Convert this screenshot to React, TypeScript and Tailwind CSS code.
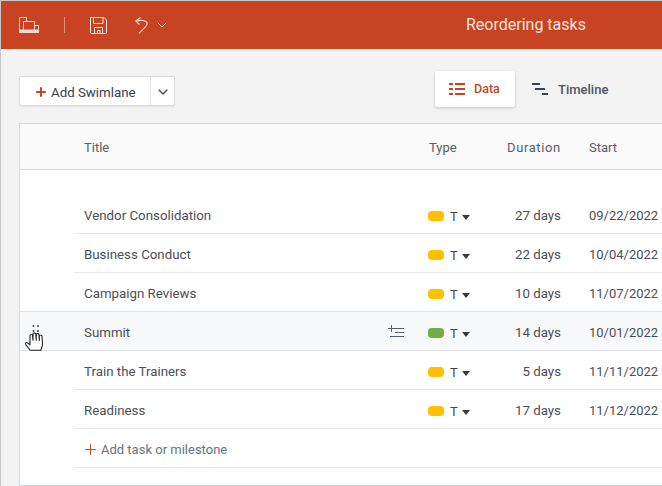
import React from 'react';
import { ChevronDown, Plus } from 'lucide-react';

// Types
interface Task {
    title: string;
    color: string;
    duration: string;
    start: string;
    active?: boolean;
}

const tasks: Task[] = [
    { title: 'Vendor Consolidation', color: 'bg-[#ffc000]', duration: '27 days', start: '09/22/2022' },
    { title: 'Business Conduct', color: 'bg-[#ffc000]', duration: '22 days', start: '10/04/2022' },
    { title: 'Campaign Reviews', color: 'bg-[#ffc000]', duration: '10 days', start: '11/07/2022' },
    { title: 'Summit', color: 'bg-[#70ad47]', duration: '14 days', start: '10/01/2022', active: true },
    { title: 'Train the Trainers', color: 'bg-[#ffc000]', duration: '5 days', start: '11/11/2022' },
    { title: 'Readiness', color: 'bg-[#ffc000]', duration: '17 days', start: '11/12/2022' },
];

// Icons
const GanttLogo = () => (
    <svg width="20" height="16" viewBox="0 0 20 16" fill="none" stroke="#f6d8cc" strokeWidth="1">
        <path d="M0.5 13V0.5H7.5V4" />
        <path d="M4.5 13V4.5H15.5V13" />
        <path d="M15.5 8.5H19.5V13" />
        <rect x="0" y="12.5" width="20" height="3.5" fill="#f6d8cc" stroke="none" />
    </svg>
);

const SaveIcon = () => (
    <svg width="17" height="17" viewBox="0 0 17 17" fill="none" stroke="#fbe9e2" strokeWidth="1">
        <path d="M0.5 0.5H14L16.5 3V15.5A1 1 0 0 1 15.5 16.5H1.5A1 1 0 0 1 0.5 15.5Z" />
        <path d="M3.5 0.5V6.5H13V0.5" />
        <path d="M4.5 16.5V10.5H12.5V16.5" />
        <path d="M7.5 13.5H10V16.5H7.5Z" />
    </svg>
);

const UndoIcon = () => (
    <svg width="13" height="17" viewBox="0 0 13 17" fill="none" stroke="#f6d8cc" strokeWidth="1.1">
        <path d="M5.5 0.5L0.8 4L4.5 7.5" />
        <path d="M0.8 4C6 2.8 11.8 3.2 12.2 6.5C12.5 9 6.5 13 4 16.5" />
    </svg>
);

const DataIcon = () => (
    <svg width="16" height="12" viewBox="0 0 16 12" fill="#c8431f">
        <rect x="0" y="0" width="4" height="2" />
        <rect x="6" y="0" width="10" height="2" />
        <rect x="0" y="5" width="4" height="2" />
        <rect x="6" y="5" width="10" height="2" />
        <rect x="0" y="10" width="4" height="2" />
        <rect x="6" y="10" width="10" height="2" />
    </svg>
);

const TimelineIcon = () => (
    <svg width="16" height="12" viewBox="0 0 16 12" fill="#3a4654">
        <rect x="0" y="0" width="8" height="2" />
        <rect x="3" y="5" width="10" height="2" />
        <rect x="10" y="10" width="6" height="2" />
    </svg>
);

const SubtaskIcon = () => (
    <svg width="16" height="13" viewBox="0 0 16 13" fill="none" stroke="#56606a" strokeWidth="1" className="-mt-[4px]">
        <path d="M0 3.5H7M3.5 0V7" />
        <path d="M7 3.5H16M7 7.5H16M2 11.5H16" />
    </svg>
);

const HandCursor = () => (
    <svg width="20" height="27" viewBox="0 0 20 27" className="absolute left-[5px] top-[13px]">
        <circle cx="8.5" cy="1" r="1" fill="#444" />
        <circle cx="13" cy="1" r="1" fill="#444" />
        <circle cx="8.5" cy="6" r="1" fill="#444" />
        <circle cx="13" cy="6" r="1" fill="#444" />
        <g transform="translate(-1 0) scale(1.25 1.1)">
            <path
                d="M5 23L1.2 17.5C0.6 16.4 2 15.4 3 16.4L4.8 18V9.5C4.8 8.2 6.6 8.2 6.8 9.5L7.2 14V8.2C7.2 7 9.2 7 9.4 8.2L9.8 14V8.6C9.8 7.4 11.8 7.4 12 8.6L12.3 14.2V10C12.4 8.9 14.2 8.9 14.4 10L14.8 17C14.8 19.5 14 21 13.4 23Z"
                fill="#fff"
                stroke="#1a1a1a"
                strokeWidth="0.85"
                strokeLinejoin="round"
            />
        </g>
    </svg>
);

const TypeCell = ({ color }: { color: string }) => (
    <div className="flex items-center">
        <span className={`w-4 h-[10px] rounded-[4px] ${color}`} />
        <span className="ml-[6px] mt-[2px] text-[13px] text-[#444]">T</span>
        <span className="ml-[4px] mt-[2px] w-0 h-0 border-x-[4px] border-x-transparent border-t-[5px] border-t-[#3a3a3a]" />
    </div>
);

// Row
const TaskRow = ({ task }: { task: Task }) => (
    <div className={`relative flex ${task.active ? 'h-[40px] -mt-px bg-[#f8f9fa] border-y border-[#e1e3e6]' : 'h-[39px]'}`}>
        <div className="w-[54px] shrink-0" />
        <div className={`flex flex-1 items-center min-w-0 pt-[4px] text-[13.3px] ${task.active ? '' : 'border-b border-[#e6e7e9]'}`}>
            <div className="w-[345px] shrink-0 flex items-center justify-between pl-[10px] pr-[15px] text-[#4a4f55]">
                <span>{task.title}</span>
                {task.active && <SubtaskIcon />}
            </div>
            <div className="w-[68px] shrink-0 pl-[9px]">
                <TypeCell color={task.color} />
            </div>
            <div className="w-[74px] shrink-0 text-right text-[#4a4f55]">{task.duration}</div>
            <div className="pl-[28px] whitespace-nowrap text-[13px] text-[#4a4f55]">{task.start}</div>
        </div>
        {task.active && <HandCursor />}
    </div>
);

// Page
export default function App() {
    return (
        <div className="w-[662px] h-[486px] overflow-hidden bg-[#f3f3f3] border-t border-l border-[#c9c9c9] font-['Roboto',sans-serif] text-[13px]">
            {/* Top bar */}
            <div className="flex items-center h-[48px] bg-[#c84321] pl-[18px]">
                <GanttLogo />
                <div className="w-px h-4 bg-[#e08e75] ml-[25px]" />
                <div className="ml-[25px]"><SaveIcon /></div>
                <div className="ml-[28px]"><UndoIcon /></div>
                <ChevronDown className="ml-[6px] text-[#f6d8cc]" size={16} strokeWidth={1.5} />
                <span className="ml-auto w-[196px] text-[16px] text-[#fbe6de]">Reordering tasks</span>
            </div>

            {/* Toolbar */}
            <div className="flex h-[74px] pl-[18px] relative">
                <div className="flex items-center mt-[27px] h-[30px] pt-[2px] bg-white border border-[#dcdcdc] rounded-[2px] shadow-[0_1px_1px_rgba(0,0,0,0.05)]">
                    <div className="flex items-center w-[130px] pl-[14px] gap-[3px] text-[13.3px] text-[#36404a]">
                        <Plus size={14} strokeWidth={3.4} className="text-[#c8431f]" />
                        <span className="mt-[1px]">Add Swimlane</span>
                    </div>
                    <div className="flex justify-center items-center w-[24px] h-[28px] -mt-[2px] pt-[2px] border-l border-[#e4e4e4]">
                        <ChevronDown size={16} strokeWidth={2} className="text-[#3f4750]" />
                    </div>
                </div>
                <div className="flex items-center gap-[9px] w-[80px] h-[36px] mt-[22px] ml-[260px] pl-[14px] bg-white rounded-[2px] shadow-[0_1px_3px_rgba(0,0,0,0.2)] font-medium text-[#c8431f]">
                    <DataIcon />
                    <span className="mt-[1px] text-[12.5px]">Data</span>
                </div>
                <div className="flex items-center gap-[10px] h-[36px] mt-[22px] ml-[17px] font-medium text-[#4a5560]">
                    <TimelineIcon />
                    <span className="mt-[1px]">Timeline</span>
                </div>
            </div>

            {/* Table */}
            <div className="ml-[18px] h-[363px] bg-white border-t border-b border-l border-[#d6d8da]">
                <div className="flex items-center h-[46px] pt-[2px] bg-[#fafafa] border-b border-[#d6d8da] text-[#565d65]">
                    <div className="w-[64px] shrink-0" />
                    <div className="w-[345px] shrink-0">Title</div>
                    <div className="w-[78px] shrink-0">Type</div>
                    <div className="w-[82px] shrink-0 tracking-[0.6px]">Duration</div>
                    <div>Start</div>
                </div>
                <div className="h-[25px]" />
                {tasks.map((task) => (
                    <TaskRow key={task.title} task={task} />
                ))}
                <div className="ml-[54px] flex items-center h-[39px] pl-[8px] pt-[3px] border-b border-[#e6e7e9] text-[#68727c]">
                    <Plus size={17} strokeWidth={1.4} className="text-[#c8431f]" />
                    <span className="ml-[2px]">Add task or milestone</span>
                </div>
            </div>
        </div>
    );
}
